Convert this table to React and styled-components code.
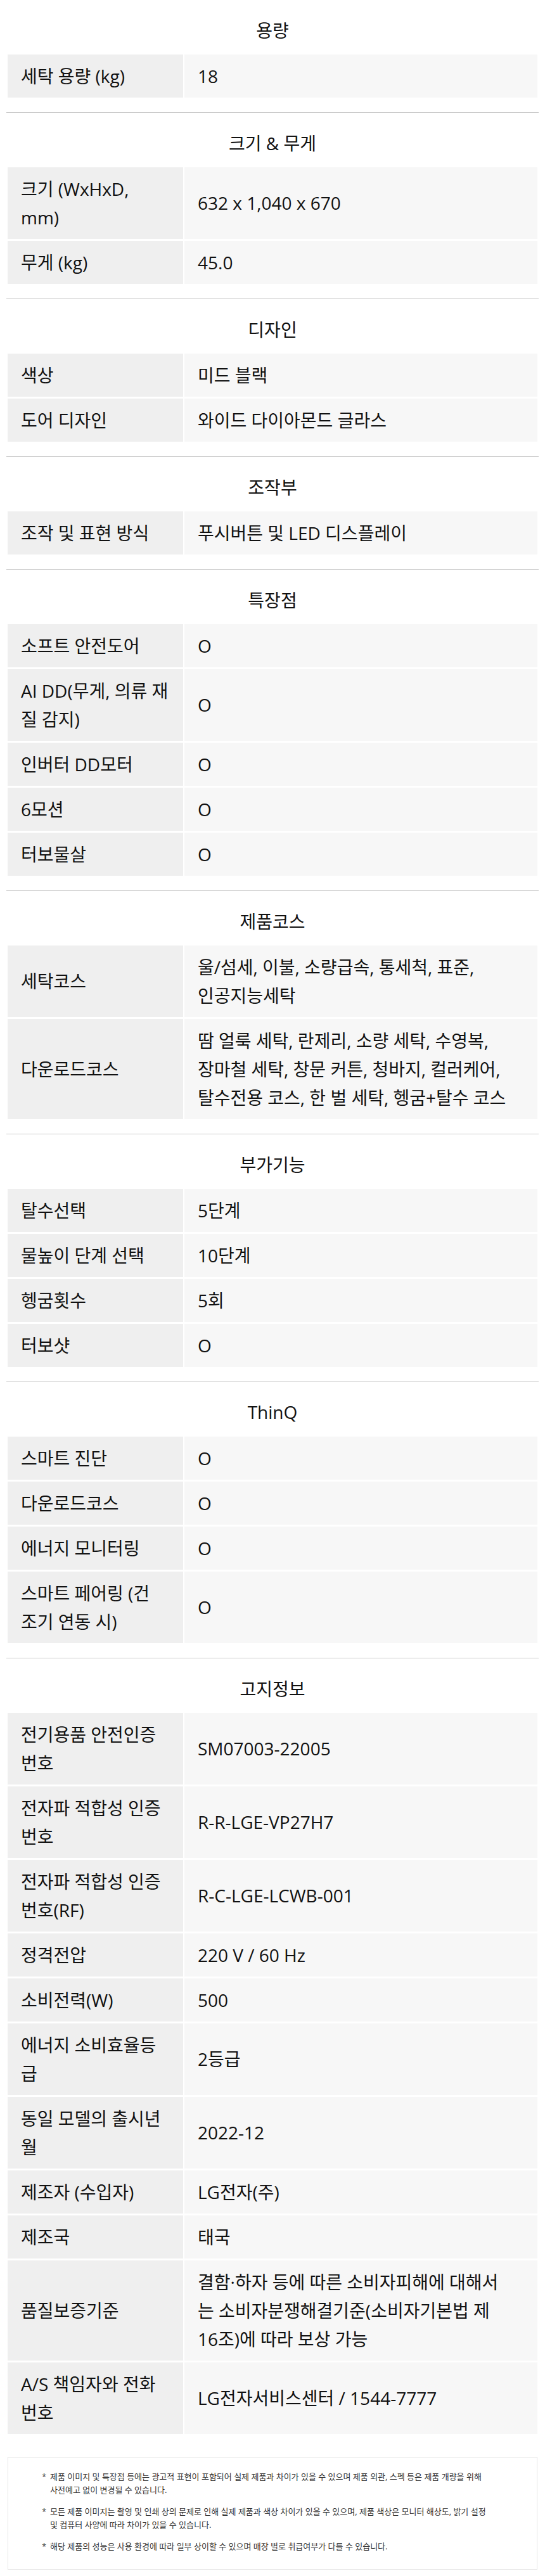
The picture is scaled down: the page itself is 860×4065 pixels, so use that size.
import styled, { createGlobalStyle } from "styled-components";

const GlobalStyle = createGlobalStyle`
  body {
    margin: 0;
    background: #fff;
    color: #111;
    font-family: "Open Sans", "Noto Sans CJK KR", sans-serif;
  }
`;

const Page = styled.div`
  padding: 0 12px 20px;
`;

const Section = styled.section`
  margin: 0 -2px;
  padding: 0 2px 23px;
  border-top: ${p => (p.$first ? "none" : "1px solid #cbcbcb")};
`;

const Title = styled.h2`
  margin: 0;
  height: 86px;
  padding-top: 8px;
  box-sizing: border-box;
  display: flex;
  align-items: center;
  justify-content: center;
  font-size: 28px;
  font-weight: 400;
`;

const Table = styled.div`
  display: flex;
  flex-direction: column;
  gap: 3px;
`;

const Row = styled.div`
  display: grid;
  grid-template-columns: 277px 1fr;
  column-gap: 2px;
`;

const Cell = styled.div`
  display: flex;
  align-items: center;
  padding: 11.5px ${p => (p.$head ? "10px" : "5px")} 11.5px 21px;
  font-size: 28px;
  line-height: 45px;
  white-space: pre-line;
  background: ${p => (p.$head ? "#efefef" : "#f7f7f7")};
`;

const Notes = styled.div`
  margin: 13px 0 0;
  padding: 20px 72px 12px 66px;
  border: 1px solid #e4e4e4;
`;

const Note = styled.p`
  margin: 0 0 13px;
  font-size: 13px;
  line-height: 21px;
  color: #333;
  position: relative;
  &::before {
    content: "*";
    position: absolute;
    left: -13px;
  }
`;

const specs = [
  {
    title: "용량",
    rows: [["세탁 용량 (kg)", "18"]],
  },
  {
    title: "크기 & 무게",
    rows: [
      ["크기 (WxHxD,\nmm)", "632 x 1,040 x 670"],
      ["무게 (kg)", "45.0"],
    ],
  },
  {
    title: "디자인",
    rows: [
      ["색상", "미드 블랙"],
      ["도어 디자인", "와이드 다이아몬드 글라스"],
    ],
  },
  {
    title: "조작부",
    rows: [["조작 및 표현 방식", "푸시버튼 및 LED 디스플레이"]],
  },
  {
    title: "특장점",
    rows: [
      ["소프트 안전도어", "O"],
      ["AI DD(무게, 의류 재\n질 감지)", "O"],
      ["인버터 DD모터", "O"],
      ["6모션", "O"],
      ["터보물살", "O"],
    ],
  },
  {
    title: "제품코스",
    rows: [
      ["세탁코스", "울/섬세, 이불, 소량급속, 통세척, 표준,\n인공지능세탁"],
      [
        "다운로드코스",
        "땀 얼룩 세탁, 란제리, 소량 세탁, 수영복,\n장마철 세탁, 창문 커튼, 청바지, 컬러케어,\n탈수전용 코스, 한 벌 세탁, 헹굼+탈수 코스",
      ],
    ],
  },
  {
    title: "부가기능",
    rows: [
      ["탈수선택", "5단계"],
      ["물높이 단계 선택", "10단계"],
      ["헹굼횟수", "5회"],
      ["터보샷", "O"],
    ],
  },
  {
    title: "ThinQ",
    rows: [
      ["스마트 진단", "O"],
      ["다운로드코스", "O"],
      ["에너지 모니터링", "O"],
      ["스마트 페어링 (건\n조기 연동 시)", "O"],
    ],
  },
  {
    title: "고지정보",
    rows: [
      ["전기용품 안전인증\n번호", "SM07003-22005"],
      ["전자파 적합성 인증\n번호", "R-R-LGE-VP27H7"],
      ["전자파 적합성 인증\n번호(RF)", "R-C-LGE-LCWB-001"],
      ["정격전압", "220 V / 60 Hz"],
      ["소비전력(W)", "500"],
      ["에너지 소비효율등\n급", "2등급"],
      ["동일 모델의 출시년\n월", "2022-12"],
      ["제조자 (수입자)", "LG전자(주)"],
      ["제조국", "태국"],
      [
        "품질보증기준",
        "결함·하자 등에 따른 소비자피해에 대해서\n는 소비자분쟁해결기준(소비자기본법 제\n16조)에 따라 보상 가능",
      ],
      ["A/S 책임자와 전화\n번호", "LG전자서비스센터 / 1544-7777"],
    ],
  },
];

const notes = [
  "제품 이미지 및 특장점 등에는 광고적 표현이 포함되어 실제 제품과 차이가 있을 수 있으며 제품 외관, 스펙 등은 제품 개량을 위해 사전예고 없이 변경될 수 있습니다.",
  "모든 제품 이미지는 촬영 및 인쇄 상의 문제로 인해 실제 제품과 색상 차이가 있을 수 있으며, 제품 색상은 모니터 해상도, 밝기 설정 및 컴퓨터 사양에 따라 차이가 있을 수 있습니다.",
  "해당 제품의 성능은 사용 환경에 따라 일부 상이할 수 있으며 매장 별로 취급여부가 다를 수 있습니다.",
];

export default function App() {
  return (
    <>
      <GlobalStyle />
      <Page>
        {specs.map((s, i) => (
          <Section key={s.title} $first={i === 0}>
            <Title>{s.title}</Title>
            <Table>
              {s.rows.map(([k, v]) => (
                <Row key={k}>
                  <Cell $head>{k}</Cell>
                  <Cell>{v}</Cell>
                </Row>
              ))}
            </Table>
          </Section>
        ))}
        <Notes>
          {notes.map(n => (
            <Note key={n}>{n}</Note>
          ))}
        </Notes>
      </Page>
    </>
  );
}
